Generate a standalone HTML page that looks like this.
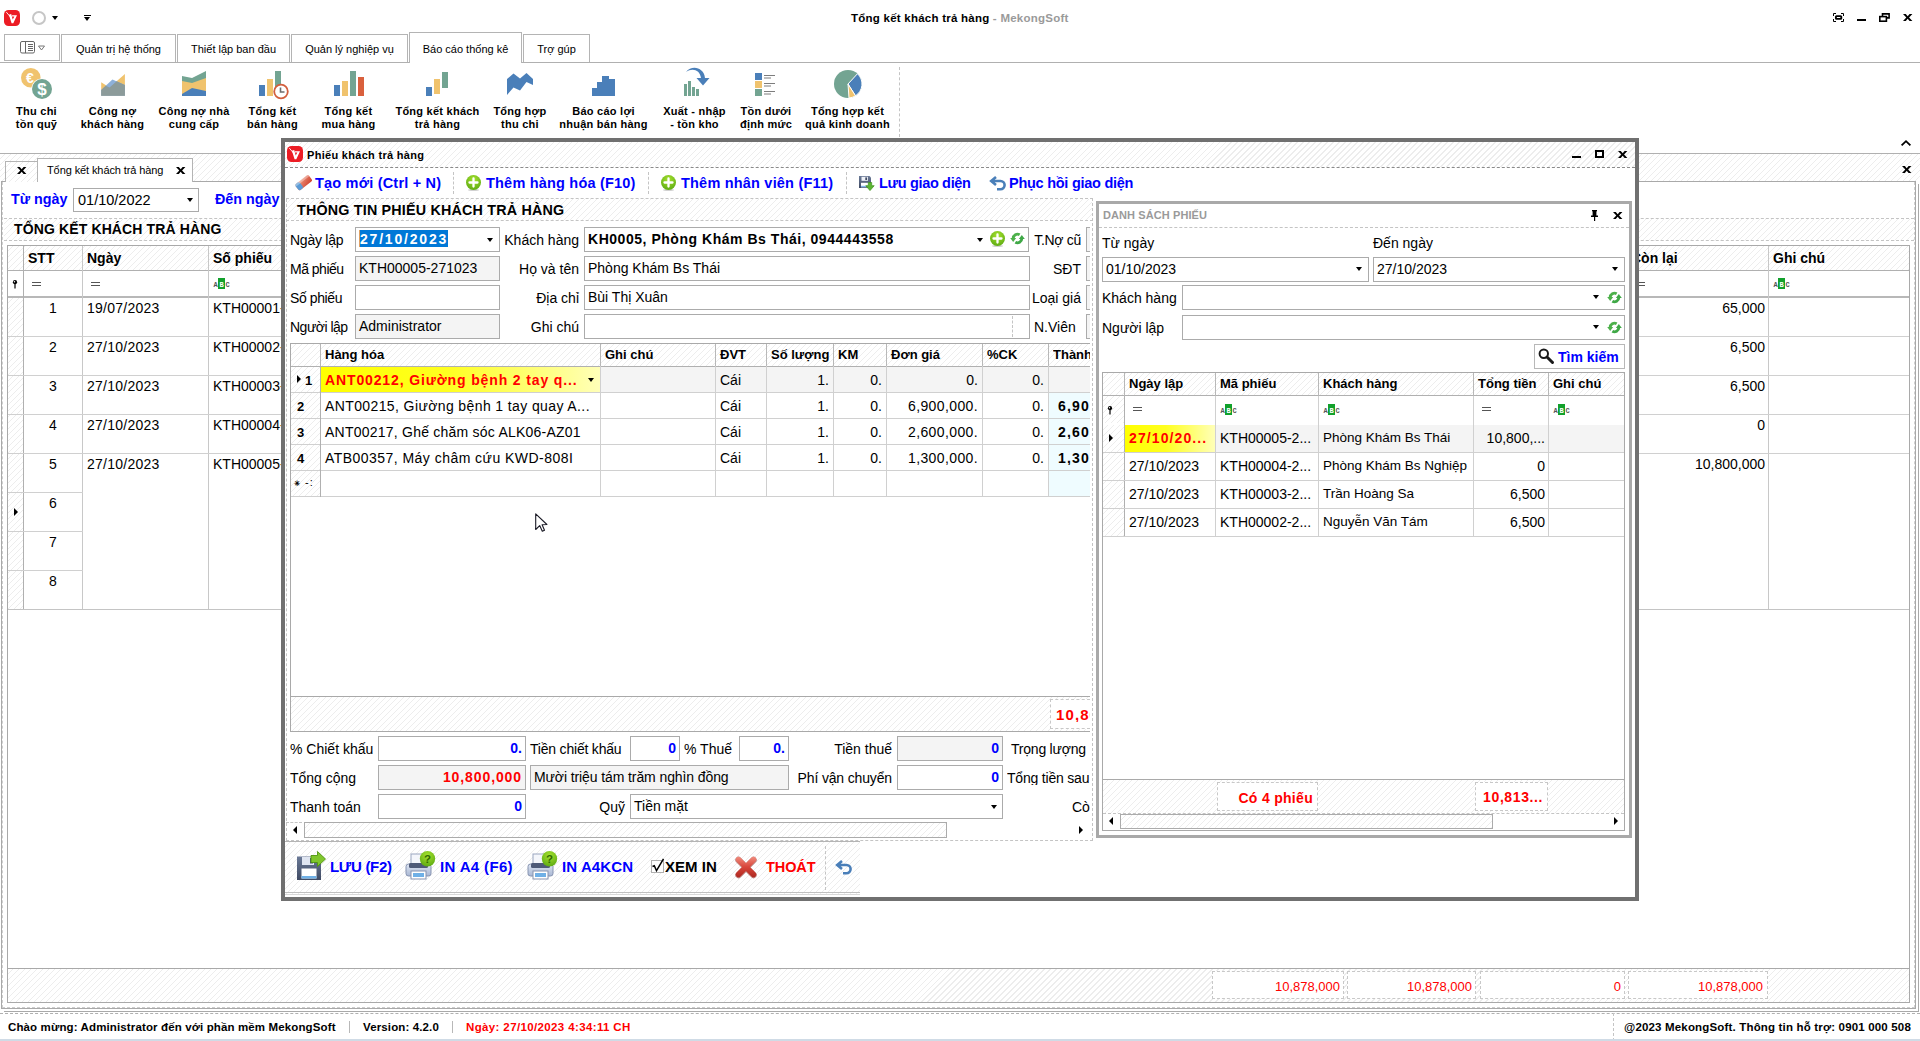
<!DOCTYPE html>
<html lang="vi">
<head>
<meta charset="utf-8">
<title>Tổng kết khách trả hàng - MekongSoft</title>
<style>
*{box-sizing:border-box;margin:0;padding:0}
html,body{width:1920px;height:1041px;overflow:hidden;background:#fff}
body{position:relative;font-family:"Liberation Sans",sans-serif;font-size:11px;color:#000;line-height:1}
.a{position:absolute;white-space:nowrap}
.b{font-weight:bold}
.blue{color:#0000ff}
.red{color:#ff0000}
.hatch{background-color:#fff;background-image:repeating-linear-gradient(135deg,rgba(0,0,0,0) 0,rgba(0,0,0,0) 3.24px,#ededed 3.24px,#ededed 4.24px)}
.hl{position:absolute;height:1px;background:#a9a9a9}
.vl{position:absolute;width:1px;background:#a9a9a9}
.dh{position:absolute;height:0;border-top:1px dashed #c4c4c4}
.dv{position:absolute;width:0;border-left:1px dashed #c4c4c4}
.inp{position:absolute;border:1px solid #ababab;background:#fff;height:25px}
.ro{background:#f4f4f4}
.t14{font-size:14px}
.t13{font-size:13px}
.rtab{position:absolute;top:34px;height:28px;border:1px solid #b4b4b4;border-bottom:none;background:#fff;text-align:center;line-height:29px;font-size:11px;box-shadow:inset 1px 1px 0 #fff,inset -1px 0 0 #fff}
.rlab{letter-spacing:.25px;position:absolute;top:105px;text-align:center;font-weight:bold;font-size:11px;line-height:13px;white-space:nowrap;transform:translateX(-50%)}
.ric{position:absolute;top:68px;width:32px;height:32px}
.arr{position:absolute;width:0;height:0;border-left:3.5px solid transparent;border-right:3.5px solid transparent;border-top:4px solid #000}
svg{position:absolute;overflow:visible}
</style>
</head>
<body>

<svg width="0" height="0" style="left:0;top:0"><defs>
<radialGradient id="gp" cx="0.5" cy="0.3" r="0.75"><stop offset="0" stop-color="#a6e22e"/><stop offset="1" stop-color="#5aa811"/></radialGradient>
<linearGradient id="gx" gradientUnits="userSpaceOnUse" x1="0" y1="2" x2="0" y2="22"><stop offset="0" stop-color="#f08a7c"/><stop offset=".5" stop-color="#d8453a"/><stop offset="1" stop-color="#b02a22"/></linearGradient>
<linearGradient id="gf" x1="0" y1="0" x2="0" y2="1"><stop offset="0" stop-color="#6b7a97"/><stop offset="1" stop-color="#3f4a63"/></linearGradient>
<linearGradient id="gpr" x1="0" y1="0" x2="0" y2="1"><stop offset="0" stop-color="#dfe6f3"/><stop offset="1" stop-color="#a9b7d3"/></linearGradient>
<linearGradient id="ger" x1="0" y1="0" x2="1" y2="1"><stop offset="0" stop-color="#f4a48c"/><stop offset="1" stop-color="#cf3f2b"/></linearGradient>
<g id="plus"><ellipse cx="7.500" cy="15" rx="5.500" ry="1" fill="#000" opacity=".18"/><circle cx="7.500" cy="7.500" r="7.500" fill="url(#gp)"/><path d="M7.500 3.500v8M3.500 7.500h8" stroke="#fff" stroke-width="2.300" stroke-linecap="round"/></g>
<g id="refr"><path d="M9.650 2.780A4.300 4.300 0 0 0 3.200 6.500" fill="none" stroke="#4db14b" stroke-width="2.900"/><path d="M.2 6L6.200 6 3.200 9.900z" fill="#4db14b"/><path d="M5.350 10.220A4.300 4.300 0 0 0 11.800 6.500" fill="none" stroke="#3fa846" stroke-width="2.900"/><path d="M8.800 7L14.800 7 11.800 3.100z" fill="#3fa846"/></g>
<g id="undo"><path d="M6 1L1.200 5 6 9M1.800 5H10.500a4 4 0 0 1 0 8.200H7" fill="none" stroke="#4a7fb9" stroke-width="2.600" stroke-linejoin="miter"/></g>
<g id="printer"><rect x="6" y="1" width="15" height="11" fill="#f4f6fb" stroke="#9aa6bf" stroke-width="1"/><rect x="1" y="11" width="25" height="12" rx="2.500" fill="url(#gpr)" stroke="#8693b0" stroke-width="1"/><rect x="4" y="10" width="19" height="5" rx="1.500" fill="#4f5b78"/><rect x="6" y="18" width="15" height="8" fill="#fff" stroke="#8693b0" stroke-width="1"/><rect x="8" y="20" width="11" height="4" fill="#6fb0e6"/><circle cx="22.500" cy="5.700" r="7.700" fill="url(#gp)"/><text x="22.500" y="10" font-family="Liberation Sans,sans-serif" font-size="11.500" font-weight="bold" fill="#2f6a00" text-anchor="middle">?</text></g>
</defs></svg>
<!-- ===== TITLE BAR ===== -->
<svg style="left:4px;top:10px" width="16" height="16" viewBox="0 0 16 16"><rect width="16" height="16" rx="4.5" fill="#ec1c24"/><path d="M2.300 2.100L6.500 7" stroke="#fff" stroke-width=".9" fill="none"/><path d="M4.900 4.700L7.200 4.100 8.700 9.600 10.400 6.400 7.900 6.400 8.100 5.300 13 5.300 9.300 13.300 7.600 13.300z" fill="#fff"/></svg>
<div class="a" style="left:32px;top:11px;width:14px;height:14px;border:2px solid #c6c6c6;border-radius:50%"></div>
<div class="arr" style="left:52px;top:16px"></div>
<div class="a" style="left:84px;top:15px;width:7px;height:1px;background:#000"></div>
<div class="arr" style="left:84px;top:17px"></div>
<div class="a b" style="left:851px;top:12.5px;font-size:11.5px;letter-spacing:.24px">Tổng kết khách trả hàng<span style="color:#9a9a9a"> - MekongSoft</span></div>
<!-- window buttons -->
<svg style="left:1833px;top:13px" width="11" height="9" viewBox="0 0 11 9" fill="none" stroke="#000"><path d="M.5 3V.5H3M8 .5h2.500V3M10.500 6v2.500H8M3 8.500H.5V6" stroke-width="1"/><rect x="2.900" y="3.100" width="5.400" height="2.800" rx=".6" stroke-width="1.900"/></svg>
<div class="a" style="left:1857px;top:19px;width:9px;height:2px;background:#000"></div>
<svg style="left:1879px;top:13px" width="11" height="9" viewBox="0 0 11 9" fill="none" stroke="#000" stroke-width="1.6"><path d="M3.5 3V.9h6.6v4H8"/><rect x=".8" y="3.6" width="6.6" height="4.6" fill="#fff"/></svg>
<svg style="left:1903px;top:14px" width="10" height="7" viewBox="0 0 10 7"><path d="M0 0h2.800l1.900 2.300L6.600 0h2.800L6.100 3.500 9.400 7h-2.800L4.700 4.700 2.800 7H0l3.300-3.500z" fill="#000"/></svg>

<!-- ===== RIBBON TABS ===== -->
<div class="hl" style="left:0;top:62px;width:1920px;background:#b0b0b0"></div>
<div class="a" style="left:4px;top:34px;width:56px;height:27px;border:1px solid #b4b4b4;background:#fff"></div>
<svg style="left:20px;top:41px" width="26" height="13" viewBox="0 0 26 13" fill="none" stroke="#666" stroke-width="1"><rect x=".5" y=".5" width="14" height="11.5" rx="1.5"/><path d="M5.5 .5v11.5M8 3.5h5M8 5.5h5M8 7.5h5M8 9.5h5" /><path d="M18.5 5h6l-3 4z" stroke="#777"/></svg>
<div class="rtab" style="left:61px;width:115px">Quản trị hệ thống</div>
<div class="rtab" style="left:177px;width:113px">Thiết lập ban đầu</div>
<div class="rtab" style="left:291px;width:117px">Quản lý nghiệp vụ</div>
<div class="rtab" style="left:409px;width:113px;top:32px;height:31px;line-height:32px">Báo cáo thống kê</div>
<div class="rtab" style="left:523px;width:67px">Trợ gúp</div>

<!-- ===== RIBBON ===== -->
<div class="rlab" style="left:36.5px">Thu chi<br>tồn quỹ</div>
<div class="rlab" style="left:112.5px">Công nợ<br>khách hàng</div>
<div class="rlab" style="left:194px">Công nợ nhà<br>cung cấp</div>
<div class="rlab" style="left:272.5px">Tổng kết<br>bán hàng</div>
<div class="rlab" style="left:348.5px">Tổng kết<br>mua hàng</div>
<div class="rlab" style="left:437.5px">Tổng kết khách<br>trả hàng</div>
<div class="rlab" style="left:520px">Tổng hợp<br>thu chi</div>
<div class="rlab" style="left:603.5px">Báo cáo lợi<br>nhuận bán hàng</div>
<div class="rlab" style="left:694.5px">Xuất - nhập<br>- tồn kho</div>
<div class="rlab" style="left:766px">Tồn dưới<br>định mức</div>
<div class="rlab" style="left:847.5px">Tổng hợp kết<br>quả kinh doanh</div>
<div class="dv" style="left:899px;top:67px;height:70px"></div>

<!-- 1 thu chi ton quy -->
<svg class="ric" style="left:21px" viewBox="0 0 32 32"><circle cx="9.8" cy="9.8" r="9.8" fill="#f0c36e"/><text x="9" y="14.5" font-family="Liberation Sans,sans-serif" font-size="14" font-weight="bold" fill="#fff" text-anchor="middle">€</text><circle cx="21" cy="21" r="10.6" fill="#fff"/><circle cx="21" cy="21" r="10" fill="#73a492"/><text x="21" y="27" font-family="Liberation Sans,sans-serif" font-size="17" font-weight="bold" fill="#fff" text-anchor="middle">$</text></svg>
<!-- 2 cong no khach hang -->
<svg class="ric" style="left:97px" viewBox="0 0 32 32"><path d="M4.200 14.300L12.500 19.600 27.900 6.100V27.700H4.200z" fill="#f0c36e"/><path d="M4.200 21.900L15.400 11.400 27.900 16.900V27.700H4.200z" fill="#8db0d9"/><path d="M4.200 21.900L8.700 17.700 12.500 19.600 19.700 13.300 27.900 16.900V27.700H4.200z" fill="#8c9b9a"/></svg>
<!-- 3 cong no nha cung cap -->
<svg class="ric" style="left:178px" viewBox="0 0 32 32"><path d="M4 8l10 2 14-7v25H4z" fill="#73a492"/><path d="M4 13l10 2 14-5v18H4z" fill="#f0c36e"/><path d="M4 26l10-6 14 3v5H4z" fill="#4a7fb9"/></svg>
<!-- 4 tong ket ban hang -->
<svg class="ric" style="left:256px" viewBox="0 0 32 32"><rect x="3" y="17" width="6" height="11" fill="#4a7fb9"/><rect x="11" y="11" width="6" height="17" fill="#f0c36e"/><rect x="19" y="3" width="6" height="18" fill="#73a492"/><circle cx="25" cy="23.500" r="6.800" fill="#fff" stroke="#d25f3e" stroke-width="1.800"/><path d="M24.500 19.500v4.500h4" fill="none" stroke="#6d6d6d" stroke-width="1.600"/></svg>
<!-- 5 tong ket mua hang -->
<svg class="ric" style="left:332px" viewBox="0 0 32 32"><rect x="2" y="17" width="6" height="11" fill="#4a7fb9"/><rect x="10" y="13" width="6" height="15" fill="#f0c36e"/><rect x="18" y="3" width="6" height="25" fill="#73a492"/><rect x="26" y="9" width="6" height="19" fill="#d9603d"/></svg>
<!-- 6 tong ket khach tra hang -->
<svg class="ric" style="left:421px" viewBox="0 0 32 32"><rect x="5" y="19" width="6" height="9" fill="#4a7fb9"/><rect x="13" y="11" width="6" height="15" fill="#f0c36e"/><rect x="21" y="4" width="6" height="16" fill="#73a492"/></svg>
<!-- 7 tong hop thu chi -->
<svg class="ric" style="left:504px" viewBox="0 0 32 32"><path d="M3 11l6.500-5.500 6.500 5 6.500-5.500 6.500 6v6l-6.500-3-6.500 8.500-6.500-3L3 27z" fill="#4a7fb9"/></svg>
<!-- 8 bao cao loi nhuan -->
<svg class="ric" style="left:588px" viewBox="0 0 32 32"><path d="M4 28V20h5v-6h5V8h7v3h6v17z" fill="#4a7fb9"/></svg>
<!-- 9 xuat nhap ton -->
<svg class="ric" style="left:679px" viewBox="0 0 32 32"><rect x="5" y="16" width="3" height="12" fill="#73a492"/><rect x="9" y="13" width="3" height="15" fill="#73a492"/><rect x="13" y="19" width="3" height="9" fill="#73a492"/><rect x="17" y="21" width="3" height="7" fill="#73a492"/><path d="M8 4.500C14 0 22 2 23 10.500h-4.500l6.500 7.500 6.500-7.500H27C26 0 14-3 8 4.500z" fill="#4a7fb9" transform="translate(-1 -0.500)"/></svg>
<!-- 10 ton duoi dinh muc -->
<svg class="ric" style="left:750px" viewBox="0 0 32 32"><rect x="5" y="5" width="7" height="7" fill="#4a7fb9"/><rect x="5" y="13" width="7" height="7" fill="#f0c36e"/><rect x="5" y="21" width="7" height="7" fill="#73a492"/><path d="M14 7.500h11M14 10h7M14 15.500h11M14 18h7M14 23.500h11M14 26h7" stroke="#7d7d7d" stroke-width="1"/></svg>
<!-- 11 tong hop ket qua -->
<svg class="ric" style="left:832px" viewBox="0 0 32 32"><circle cx="16" cy="16" r="14" fill="#73a492"/><path d="M16 16L25.500 5.700A14 14 0 0 1 23.500 27.800z" fill="#4a7fb9" stroke="#fff" stroke-width="1"/><path d="M16 16L23.500 27.800A14 14 0 0 1 17 30z" fill="#f0c36e" stroke="#fff" stroke-width="1"/></svg>

<svg style="left:1901px;top:140px" width="10" height="6" viewBox="0 0 10 6" fill="none" stroke="#000" stroke-width="1.8"><path d="M.6 5.4L5 1.2l4.4 4.2"/></svg>
<div class="hl" style="left:0;top:153px;width:1920px;background:#b0b0b0"></div>


<!-- ===== DOC AREA ===== -->
<div class="a hatch" style="left:0;top:154px;width:1920px;height:27px"></div>
<svg style="left:1902px;top:166px" width="10" height="7" viewBox="0 0 10 7"><path d="M0 0h2.800l1.900 2.300L6.600 0h2.800L6.100 3.500 9.400 7h-2.800L4.700 4.700 2.800 7H0l3.300-3.500z" fill="#000"/></svg>
<!-- outer second border -->
<div class="vl" style="left:1918px;top:184px;height:828px"></div>
<div class="hl" style="left:4px;top:1011px;width:1915px"></div>
<!-- page panel -->
<div class="a" style="left:1px;top:181px;width:1915px;height:828px;border:1px solid #a9a9a9;background:#fff"></div>
<div class="a" style="left:2px;top:182px;width:1913px;height:826px;border:1px dashed #cfcfcf;border-top:none"></div>
<!-- tabs -->
<div class="a hatch" style="left:5px;top:161px;width:33px;height:21px;border:1px solid #b4b4b4;border-bottom:none"></div>
<svg style="left:17px;top:167px" width="10" height="7" viewBox="0 0 10 7"><path d="M0 0h2.800l1.900 2.300L6.600 0h2.800L6.100 3.500 9.400 7h-2.800L4.700 4.700 2.800 7H0l3.300-3.500z" fill="#000"/></svg>
<div class="a" style="left:37px;top:158px;width:156px;height:24px;border:1px solid #b4b4b4;border-bottom:none;background:#fff"></div>
<div class="a" style="left:47px;top:165px;font-size:11px;letter-spacing:-.1px">Tổng kết khách trả hàng</div>
<svg style="left:176px;top:167px" width="10" height="7" viewBox="0 0 10 7"><path d="M0 0h2.800l1.900 2.300L6.600 0h2.800L6.100 3.500 9.400 7h-2.800L4.700 4.700 2.800 7H0l3.300-3.500z" fill="#000"/></svg>
<div class="dh" style="left:0;top:1013px;width:1920px;border-color:#b0b0b0"></div>

<!-- filter row -->
<div class="a b blue" style="left:11px;top:192px;font-size:14.300px">Từ ngày</div>
<div class="inp" style="left:73px;top:188px;width:126px;height:24px"></div>
<div class="a" style="left:78px;top:193px;font-size:14.500px">01/10/2022</div>
<div class="arr" style="left:187px;top:198px"></div>
<div class="a b blue" style="left:215px;top:192px;font-size:14.300px">Đến ngày</div>
<div class="a hatch" style="left:4px;top:219px;width:1910px;height:22px"></div>
<div class="dh" style="left:4px;top:218px;width:1910px"></div>
<div class="dh" style="left:4px;top:240px;width:1910px"></div>
<div class="a b" style="left:14px;top:222px;font-size:14px;letter-spacing:.13px">TỔNG KẾT KHÁCH TRẢ HÀNG</div>

<!-- grid -->
<div class="a" style="left:7px;top:245px;width:1903px;height:758px;border:1px solid #a9a9a9;background:#fff"></div>
<div class="a hatch" style="left:8px;top:246px;width:1901px;height:25px"></div>
<div class="hl" style="left:8px;top:270px;width:1901px;background:#b0b0b0"></div>
<div class="hl" style="left:8px;top:296px;width:1901px;height:2px;background:#b8b8b8"></div>
<div class="a hatch" style="left:8px;top:298px;width:15px;height:311px"></div>
<div class="vl" style="left:23px;top:246px;height:364px;background:#b0b0b0"></div>
<div class="vl" style="left:82px;top:246px;height:364px;background:#c8c8c8"></div>
<div class="vl" style="left:208px;top:246px;height:364px;background:#c8c8c8"></div>
<div class="vl" style="left:1768px;top:246px;height:364px;background:#c8c8c8"></div>
<div class="hl" style="left:8px;top:336px;width:1901px;background:#d0d0d0"></div>
<div class="hl" style="left:8px;top:375px;width:1901px;background:#d0d0d0"></div>
<div class="hl" style="left:8px;top:414px;width:1901px;background:#d0d0d0"></div>
<div class="hl" style="left:8px;top:453px;width:1901px;background:#d0d0d0"></div>
<div class="hl" style="left:8px;top:492px;width:75px;background:#d0d0d0"></div>
<div class="hl" style="left:8px;top:531px;width:75px;background:#d0d0d0"></div>
<div class="hl" style="left:8px;top:570px;width:75px;background:#d0d0d0"></div>
<div class="hl" style="left:8px;top:609px;width:1901px;background:#c4c4c4"></div>
<div class="a b t14" style="left:28px;top:251px">STT</div>
<div class="a b t14" style="left:87px;top:251px">Ngày</div>
<div class="a b t14" style="left:213px;top:251px">Số phiếu</div>
<div class="a b t14" style="left:1631px;top:251px">Còn lại</div>
<div class="a b t14" style="left:1773px;top:251px">Ghi chú</div>
<!-- filter row icons -->
<svg style="left:12px;top:279px" width="6" height="10" viewBox="0 0 6 10"><circle cx="3" cy="3.200" r="2.100" fill="#000"/><circle cx="2.500" cy="2.700" r=".7" fill="#fff"/><path d="M3 5v4.500" stroke="#000" stroke-width="1.200"/></svg>
<div class="a" style="left:32px;top:282px;width:9px;height:4px;border-top:1px solid #555;border-bottom:1px solid #555"></div>
<div class="a" style="left:91px;top:282px;width:9px;height:4px;border-top:1px solid #555;border-bottom:1px solid #555"></div>
<div class="a" style="left:1639px;top:282px;width:6px;height:4px;border-top:1px solid #555;border-bottom:1px solid #555"></div>
<svg style="left:213px;top:278px" width="17" height="11" viewBox="0 0 17 11"><rect x="5" y="0" width="7" height="11" fill="#12a12c"/><text x="2.500" y="8.500" font-family="Liberation Mono,monospace" font-size="7" font-weight="bold" fill="#555" text-anchor="middle">A</text><text x="8.500" y="8.500" font-family="Liberation Mono,monospace" font-size="7" font-weight="bold" fill="#fff" text-anchor="middle">B</text><text x="14.500" y="8.500" font-family="Liberation Mono,monospace" font-size="7" font-weight="bold" fill="#555" text-anchor="middle">C</text></svg>
<svg style="left:1773px;top:278px" width="17" height="11" viewBox="0 0 17 11"><rect x="5" y="0" width="7" height="11" fill="#12a12c"/><text x="2.500" y="8.500" font-family="Liberation Mono,monospace" font-size="7" font-weight="bold" fill="#555" text-anchor="middle">A</text><text x="8.500" y="8.500" font-family="Liberation Mono,monospace" font-size="7" font-weight="bold" fill="#fff" text-anchor="middle">B</text><text x="14.500" y="8.500" font-family="Liberation Mono,monospace" font-size="7" font-weight="bold" fill="#555" text-anchor="middle">C</text></svg>
<!-- rows -->
<div class="a t14" style="left:24px;width:58px;text-align:center;top:301px">1</div>
<div class="a t14" style="left:24px;width:58px;text-align:center;top:340px">2</div>
<div class="a t14" style="left:24px;width:58px;text-align:center;top:379px">3</div>
<div class="a t14" style="left:24px;width:58px;text-align:center;top:418px">4</div>
<div class="a t14" style="left:24px;width:58px;text-align:center;top:457px">5</div>
<div class="a t14" style="left:24px;width:58px;text-align:center;top:496px">6</div>
<div class="a t14" style="left:24px;width:58px;text-align:center;top:535px">7</div>
<div class="a t14" style="left:24px;width:58px;text-align:center;top:574px">8</div>
<div class="a t14" style="left:87px;top:301px;letter-spacing:.25px">19/07/2023</div>
<div class="a t14" style="left:87px;top:340px;letter-spacing:.25px">27/10/2023</div>
<div class="a t14" style="left:87px;top:379px;letter-spacing:.25px">27/10/2023</div>
<div class="a t14" style="left:87px;top:418px;letter-spacing:.25px">27/10/2023</div>
<div class="a t14" style="left:87px;top:457px;letter-spacing:.25px">27/10/2023</div>
<div class="a t14" style="left:213px;top:301px">KTH00001-190723</div>
<div class="a t14" style="left:213px;top:340px">KTH00002-271023</div>
<div class="a t14" style="left:213px;top:379px">KTH00003-271023</div>
<div class="a t14" style="left:213px;top:418px">KTH00004-271023</div>
<div class="a t14" style="left:213px;top:457px">KTH00005-271023</div>
<div class="a t14" style="right:155px;top:301px">65,000</div>
<div class="a t14" style="right:155px;top:340px">6,500</div>
<div class="a t14" style="right:155px;top:379px">6,500</div>
<div class="a t14" style="right:155px;top:418px">0</div>
<div class="a t14" style="right:155px;top:457px">10,800,000</div>
<div class="a" style="left:14px;top:508px;width:0;height:0;border-top:4px solid transparent;border-bottom:4px solid transparent;border-left:4px solid #000"></div>
<!-- footer -->
<div class="a hatch" style="left:8px;top:969px;width:1901px;height:33px"></div>
<div class="hl" style="left:8px;top:968px;width:1901px"></div>
<div class="a" style="left:1212px;top:971px;width:132px;height:28px;border:1px dashed #c8c8c8;background:#fff"></div>
<div class="a" style="left:1347px;top:971px;width:129px;height:28px;border:1px dashed #c8c8c8;background:#fff"></div>
<div class="a" style="left:1480px;top:971px;width:145px;height:28px;border:1px dashed #c8c8c8;background:#fff"></div>
<div class="a" style="left:1628px;top:971px;width:140px;height:28px;border:1px dashed #c8c8c8;background:#fff"></div>
<div class="a red t13" style="right:580px;top:980px">10,878,000</div>
<div class="a red t13" style="right:448px;top:980px">10,878,000</div>
<div class="a red t13" style="right:299px;top:980px">0</div>
<div class="a red t13" style="right:157px;top:980px">10,878,000</div>



<!-- ===== DIALOG ===== -->
<div class="a" style="left:281px;top:138px;width:1358px;height:763px;border:4px solid #707070;background:#fff"></div>
<div class="a hatch" style="left:285px;top:142px;width:1350px;height:25px"></div>
<div class="dh" style="left:285px;top:167px;width:1350px;border-top:1px dashed #8a8a8a"></div>
<svg style="left:287px;top:146px" width="16" height="16" viewBox="0 0 16 16"><rect width="16" height="16" rx="4.500" fill="#ec1c24"/><path d="M2.300 2.100L6.500 7" stroke="#fff" stroke-width=".9" fill="none"/><path d="M4.900 4.700L7.200 4.100 8.700 9.600 10.400 6.400 7.900 6.400 8.100 5.300 13 5.300 9.300 13.300 7.600 13.300z" fill="#fff"/></svg>
<div class="a b" style="left:307px;top:149.500px;font-size:11px;letter-spacing:.3px">Phiếu khách trả hàng</div>
<div class="a" style="left:1572px;top:156px;width:9px;height:2px;background:#000"></div>
<div class="a" style="left:1595px;top:150px;width:9px;height:8px;border:2px solid #000"></div>
<svg style="left:1618px;top:151px" width="10" height="7" viewBox="0 0 10 7"><path d="M0 0h2.800l1.900 2.300L6.600 0h2.800L6.100 3.500 9.400 7h-2.800L4.700 4.700 2.800 7H0l3.300-3.500z" fill="#000"/></svg>

<!-- toolbar -->

<svg style="left:295px;top:175px" width="17" height="15" viewBox="0 0 17 15"><g transform="rotate(-38 8.500 7.500)"><rect x="0" y="4" width="17" height="7.500" rx="1.600" fill="url(#ger)"/><rect x="0" y="4" width="5.500" height="7.500" rx="1.600" fill="#5b9bd5"/><rect x="0" y="4" width="17" height="2.200" rx="1" fill="#fff" opacity=".35"/></g></svg>
<svg style="left:466px;top:175px" width="15" height="16" viewBox="0 0 15 16"><use href="#plus"/></svg>
<svg style="left:661px;top:175px" width="15" height="16" viewBox="0 0 15 16"><use href="#plus"/></svg>
<svg style="left:859px;top:176px" width="16" height="15" viewBox="0 0 16 15"><path d="M0 0h10.500l1.500 1.500V12H0z" fill="url(#gf)"/><rect x="2.500" y="0.800" width="6.500" height="4" fill="#eef1f7"/><rect x="6.300" y="1.400" width="1.800" height="2.600" fill="#3f4a63"/><rect x="2" y="6.800" width="8" height="4.400" fill="#fff"/><rect x="2" y="9.800" width="8" height="1.400" fill="#7fb2e5"/><path d="M9.300 6.500h3.400v3.200h2.500L11 14.600 6.800 9.700h2.500z" fill="#5cb531" stroke="#3d8f1c" stroke-width=".7"/></svg>
<svg style="left:989px;top:176px" width="17" height="15" viewBox="0 0 17 15"><use href="#undo" transform="translate(1 0)"/></svg>

<div class="a b blue" style="left:315px;top:176px;font-size:14.500px;letter-spacing:.2px">Tạo mới (Ctrl + N)</div>
<div class="dv" style="left:453px;top:172px;height:22px"></div>
<div class="a b blue" style="left:486px;top:176px;font-size:14.500px;letter-spacing:.2px">Thêm hàng hóa (F10)</div>
<div class="dv" style="left:648px;top:172px;height:22px"></div>
<div class="a b blue" style="left:681px;top:176px;font-size:14.500px;letter-spacing:.2px">Thêm nhân viên (F11)</div>
<div class="dv" style="left:846px;top:172px;height:22px"></div>
<div class="a b blue" style="left:879px;top:176px;font-size:14.500px;letter-spacing:-.33px">Lưu giao diện</div>
<div class="a b blue" style="left:1009px;top:176px;font-size:14.500px;letter-spacing:-.26px">Phục hồi giao diện</div>

<!-- group header -->
<div class="a hatch" style="left:286px;top:199px;width:806px;height:21px"></div>
<div class="dh" style="left:286px;top:198px;width:807px"></div>
<div class="dh" style="left:286px;top:220px;width:807px"></div>
<div class="dv" style="left:1092px;top:198px;height:643px"></div>
<div class="dh" style="left:286px;top:840px;width:807px"></div>
<div class="a b" style="left:297px;top:203px;font-size:14.300px;letter-spacing:.2px">THÔNG TIN PHIẾU KHÁCH TRẢ HÀNG</div>

<!-- form left -->
<div class="a t14" style="left:290px;top:233px;letter-spacing:-.25px">Ngày lập</div>
<div class="a t14" style="left:290px;top:262px;letter-spacing:-.5px">Mã phiếu</div>
<div class="a t14" style="left:290px;top:291px;letter-spacing:-.4px">Số phiếu</div>
<div class="a t14" style="left:290px;top:320px;letter-spacing:-.5px">Người lập</div>
<div class="inp" style="left:355px;top:227px;width:145px"></div>
<div class="inp ro" style="left:355px;top:256px;width:145px"></div>
<div class="inp" style="left:355px;top:285px;width:145px"></div>
<div class="inp ro" style="left:355px;top:314px;width:145px"></div>
<div class="a" style="left:359px;top:230px;width:89px;height:17px;background:#0078d7;border-left:1px solid #e0a060"></div>
<div class="a b t14" style="left:360px;top:232px;color:#fff;letter-spacing:1.8px">27/10/2023</div>
<div class="arr" style="left:487px;top:238px"></div>
<div class="a t14" style="left:359px;top:261px">KTH00005-271023</div>
<div class="a t14" style="left:359px;top:319px">Administrator</div>
<div class="a t14" style="right:1341px;top:233px">Khách hàng</div>
<div class="a t14" style="right:1341px;top:262px">Họ và tên</div>
<div class="a t14" style="right:1341px;top:291px">Địa chỉ</div>
<div class="a t14" style="right:1341px;top:320px">Ghi chú</div>
<div class="inp" style="left:584px;top:227px;width:445px"></div>
<div class="inp" style="left:584px;top:256px;width:446px"></div>
<div class="inp" style="left:584px;top:285px;width:446px"></div>
<div class="inp" style="left:584px;top:314px;width:446px"></div>
<div class="dv" style="left:1012px;top:316px;height:21px"></div>
<div class="a b t14" style="left:588px;top:232px;letter-spacing:.53px">KH0005, Phòng Khám Bs Thái, 0944443558</div>
<div class="arr" style="left:977px;top:238px"></div>

<svg style="left:990px;top:231px" width="15" height="16" viewBox="0 0 15 16"><use href="#plus"/></svg>
<svg style="left:1010px;top:232px" width="15" height="13" viewBox="0 0 15 13"><use href="#refr"/></svg>

<div class="a t14" style="left:588px;top:261px">Phòng Khám Bs Thái</div>
<div class="a t14" style="left:588px;top:290px">Bùi Thị Xuân</div>
<div class="a t14" style="right:839px;top:233px;letter-spacing:-.3px">T.Nợ cũ</div>
<div class="a t14" style="right:839px;top:262px">SĐT</div>
<div class="a t14" style="right:839px;top:291px">Loại giá</div>
<div class="a t14" style="left:1034px;top:320px">N.Viên</div>
<div class="inp ro" style="left:1086px;top:227px;width:4px;border-right:none"></div>
<div class="inp ro" style="left:1086px;top:256px;width:4px;border-right:none"></div>
<div class="inp ro" style="left:1086px;top:285px;width:4px;border-right:none"></div>
<div class="inp ro" style="left:1086px;top:314px;width:4px;border-right:none"></div>

<!-- dialog grid -->
<div class="a" style="left:290px;top:343px;width:800px;height:389px;border:1px solid #a9a9a9;border-right:none;background:#fff"></div>
<div class="a hatch" style="left:291px;top:344px;width:799px;height:22px"></div>
<div class="a hatch" style="left:291px;top:367px;width:29px;height:129px"></div>
<div class="a" style="left:321px;top:367px;width:769px;height:25px;background:#f4f4f4"></div>
<div class="a" style="left:321px;top:367px;width:279px;height:25px;background:linear-gradient(90deg,#ffff00 0,#ffff20 45%,#ffffb8 100%)"></div>
<div class="a" style="left:1049px;top:393px;width:41px;height:103px;background:#effcff"></div>
<div class="hl" style="left:291px;top:366px;width:799px;background:#b0b0b0"></div>
<div class="hl" style="left:291px;top:392px;width:799px;background:#d0d0d0"></div>
<div class="hl" style="left:291px;top:418px;width:799px;background:#d0d0d0"></div>
<div class="hl" style="left:291px;top:444px;width:799px;background:#d0d0d0"></div>
<div class="hl" style="left:291px;top:470px;width:799px;background:#d0d0d0"></div>
<div class="hl" style="left:291px;top:496px;width:799px;background:#d0d0d0"></div>
<div class="vl" style="left:320px;top:344px;height:153px;background:#b0b0b0"></div>
<div class="vl" style="left:320px;top:344px;height:22px;background:#b8b8b8"></div>
<div class="vl" style="left:600px;top:344px;height:153px;background:#d0d0d0"></div>
<div class="vl" style="left:600px;top:344px;height:22px;background:#b8b8b8"></div>
<div class="vl" style="left:715px;top:344px;height:153px;background:#d0d0d0"></div>
<div class="vl" style="left:715px;top:344px;height:22px;background:#b8b8b8"></div>
<div class="vl" style="left:766px;top:344px;height:153px;background:#d0d0d0"></div>
<div class="vl" style="left:766px;top:344px;height:22px;background:#b8b8b8"></div>
<div class="vl" style="left:833px;top:344px;height:153px;background:#d0d0d0"></div>
<div class="vl" style="left:833px;top:344px;height:22px;background:#b8b8b8"></div>
<div class="vl" style="left:886px;top:344px;height:153px;background:#d0d0d0"></div>
<div class="vl" style="left:886px;top:344px;height:22px;background:#b8b8b8"></div>
<div class="vl" style="left:982px;top:344px;height:153px;background:#d0d0d0"></div>
<div class="vl" style="left:982px;top:344px;height:22px;background:#b8b8b8"></div>
<div class="vl" style="left:1048px;top:344px;height:153px;background:#d0d0d0"></div>
<div class="vl" style="left:1048px;top:344px;height:22px;background:#b8b8b8"></div>
<div class="a b t13" style="left:325px;top:348px">Hàng hóa</div>
<div class="a b t13" style="left:605px;top:348px">Ghi chú</div>
<div class="a b t13" style="left:720px;top:348px">ĐVT</div>
<div class="a b t13" style="left:771px;top:348px">Số lượng</div>
<div class="a b t13" style="left:838px;top:348px">KM</div>
<div class="a b t13" style="left:891px;top:348px">Đơn giá</div>
<div class="a b t13" style="left:987px;top:348px">%CK</div>
<div class="a b t13" style="left:1053px;top:348px;width:37px;overflow:hidden">Thành tiền</div>
<div class="a b t13" style="left:305px;top:374px">1</div>
<div class="a b t13" style="left:297px;top:400px">2</div>
<div class="a b t13" style="left:297px;top:426px">3</div>
<div class="a b t13" style="left:297px;top:452px">4</div>
<div class="a" style="left:297px;top:375px;width:0;height:0;border-top:4px solid transparent;border-bottom:4px solid transparent;border-left:4px solid #000"></div>
<div class="a" style="left:294px;top:477px;font-size:11px;letter-spacing:1px">&#8277; -:</div>
<div class="a b red t14" style="left:325px;top:373px;letter-spacing:.87px">ANT00212, Giường bệnh 2 tay q...</div>
<div class="a t14" style="left:720px;top:373px">Cái</div>
<div class="a t14" style="right:1091px;top:373px">1.</div>
<div class="a t14" style="right:1038px;top:373px">0.</div>
<div class="a t14" style="right:942px;top:373px">0.</div>
<div class="a t14" style="right:876px;top:373px">0.</div>
<div class="a t14" style="left:325px;top:399px;letter-spacing:.39px">ANT00215, Giường bệnh 1 tay quay A...</div>
<div class="a t14" style="left:720px;top:399px">Cái</div>
<div class="a t14" style="right:1091px;top:399px">1.</div>
<div class="a t14" style="right:1038px;top:399px">0.</div>
<div class="a t14" style="right:942px;top:399px;letter-spacing:.38px">6,900,000.</div>
<div class="a t14" style="right:876px;top:399px">0.</div>
<div class="a b t14" style="left:1058px;top:399px;width:32px;overflow:hidden;letter-spacing:1.2px">6,900,000</div>
<div class="a t14" style="left:325px;top:425px;letter-spacing:.23px">ANT00217, Ghế chăm sóc ALK06-AZ01</div>
<div class="a t14" style="left:720px;top:425px">Cái</div>
<div class="a t14" style="right:1091px;top:425px">1.</div>
<div class="a t14" style="right:1038px;top:425px">0.</div>
<div class="a t14" style="right:942px;top:425px;letter-spacing:.38px">2,600,000.</div>
<div class="a t14" style="right:876px;top:425px">0.</div>
<div class="a b t14" style="left:1058px;top:425px;width:32px;overflow:hidden;letter-spacing:1.2px">2,600,000</div>
<div class="a t14" style="left:325px;top:451px;letter-spacing:.46px">ATB00357, Máy châm cứu KWD-808I</div>
<div class="a t14" style="left:720px;top:451px">Cái</div>
<div class="a t14" style="right:1091px;top:451px">1.</div>
<div class="a t14" style="right:1038px;top:451px">0.</div>
<div class="a t14" style="right:942px;top:451px;letter-spacing:.38px">1,300,000.</div>
<div class="a t14" style="right:876px;top:451px">0.</div>
<div class="a b t14" style="left:1058px;top:451px;width:32px;overflow:hidden;letter-spacing:1.2px">1,300,000</div>
<div class="arr" style="left:588px;top:378px"></div>
<div class="a hatch" style="left:291px;top:697px;width:799px;height:34px"></div>
<div class="hl" style="left:291px;top:696px;width:799px"></div>
<div class="a" style="left:1050px;top:699px;width:40px;height:30px;border:1px dashed #c8c8c8;border-right:none;background:#fff"></div>
<div class="a b red t14" style="left:1056px;top:707px;width:34px;overflow:hidden;letter-spacing:1.1px;font-size:15px">10,800,000</div>

<!-- dialog bottom form -->
<div class="a t14" style="left:290px;top:742px">% Chiết khấu</div>
<div class="a t14" style="left:290px;top:771px">Tổng cộng</div>
<div class="a t14" style="left:290px;top:800px">Thanh toán</div>
<div class="inp" style="left:378px;top:736px;width:148px"></div>
<div class="inp ro" style="left:378px;top:765px;width:148px"></div>
<div class="inp" style="left:378px;top:794px;width:148px"></div>
<div class="a b blue t14" style="right:1398px;top:741px">0.</div>
<div class="a b red t14" style="right:1398px;top:770px;letter-spacing:.9px">10,800,000</div>
<div class="a b blue t14" style="right:1398px;top:799px">0</div>
<div class="a t14" style="left:530px;top:742px;letter-spacing:-.2px">Tiền chiết khấu</div>
<div class="inp" style="left:630px;top:736px;width:50px"></div>
<div class="a b blue t14" style="right:1244px;top:741px">0</div>
<div class="a t14" style="left:684px;top:742px">% Thuế</div>
<div class="inp" style="left:739px;top:736px;width:50px"></div>
<div class="a b blue t14" style="right:1135px;top:741px">0.</div>
<div class="a t14" style="right:1028px;top:742px">Tiền thuế</div>
<div class="inp ro" style="left:897px;top:736px;width:106px"></div>
<div class="a b blue t14" style="right:921px;top:741px">0</div>
<div class="a t14" style="left:1011px;top:742px;letter-spacing:-.22px">Trọng lượng</div>
<div class="inp ro" style="left:530px;top:765px;width:259px"></div>
<div class="a t14" style="left:534px;top:770px;letter-spacing:-.1px">Mười triệu tám trăm nghìn đồng</div>
<div class="a t14" style="right:1028px;top:771px;letter-spacing:-.15px">Phí vận chuyển</div>
<div class="inp" style="left:897px;top:765px;width:106px"></div>
<div class="a b blue t14" style="right:921px;top:770px">0</div>
<div class="a t14" style="left:1007px;top:771px;width:83px;overflow:hidden;letter-spacing:-.2px">Tổng tiền sau</div>
<div class="a t14" style="right:1295px;top:800px">Quỹ</div>
<div class="inp" style="left:630px;top:794px;width:373px"></div>
<div class="a t14" style="left:634px;top:799px">Tiền mặt</div>
<div class="arr" style="left:991px;top:805px"></div>
<div class="a t14" style="left:1072px;top:800px;width:18px;overflow:hidden">Còn lại</div>
<div class="dh" style="left:286px;top:822px;width:16px"></div>
<div class="a" style="left:293px;top:826px;width:0;height:0;border-top:4px solid transparent;border-bottom:4px solid transparent;border-right:4px solid #000"></div>
<div class="a hatch" style="left:304px;top:822px;width:643px;height:16px;border:1px solid #ababab"></div>
<div class="a" style="left:1079px;top:826px;width:0;height:0;border-top:4px solid transparent;border-bottom:4px solid transparent;border-left:4px solid #000"></div>
<div class="a hatch" style="left:285px;top:842px;width:575px;height:52px"></div>
<div class="hl" style="left:285px;top:841px;width:575px;background:#b4b4b4"></div>
<div class="dv" style="left:286px;top:199px;height:642px"></div>
<div class="hl" style="left:285px;top:892px;width:575px;background:#c0c0c0"></div>
<div class="hl" style="left:285px;top:894px;width:575px;background:#d8d8d8"></div>

<svg style="left:297px;top:851px" width="29" height="30" viewBox="0 0 29 30"><path d="M0 5.500h21l3 3V29H0z" fill="url(#gf)"/><rect x="5" y="6" width="12" height="8" fill="#dfe5f1"/><rect x="13" y="7" width="3" height="5.500" fill="#4a566f"/><rect x="4.500" y="17.500" width="15" height="10" fill="#fff"/><rect x="4.500" y="25" width="15" height="2.500" fill="#6fb0e6"/><path d="M14 4.500h6.500V.5L28.500 8 20.500 15.500V11.500H14z" fill="#7fc62c" stroke="#4f9410" stroke-width=".9"/></svg>
<svg style="left:405px;top:853px" width="31" height="28" viewBox="0 0 31 28"><use href="#printer"/></svg>
<svg style="left:527px;top:853px" width="31" height="28" viewBox="0 0 31 28"><use href="#printer"/></svg>
<svg style="left:734px;top:855px" width="24" height="24" viewBox="0 0 24 24" fill="none" stroke-linecap="round"><path d="M4.500 5L19.500 20M19.500 5L4.500 20" stroke="#8e1f18" stroke-width="6.400" opacity=".55"/><path d="M4.500 4.500L19.500 19.500M19.500 4.500L4.500 19.500" stroke="url(#gx)" stroke-width="5.400"/></svg>
<svg style="left:835px;top:860px" width="17" height="15" viewBox="0 0 17 15"><use href="#undo" transform="translate(1 0)"/></svg>

<div class="a b blue" style="left:330px;top:859px;font-size:15px;letter-spacing:-.3px">LƯU (F2)</div>
<div class="a b blue" style="left:440px;top:859px;font-size:15px;letter-spacing:.35px">IN A4 (F6)</div>
<div class="a b blue" style="left:562px;top:859px;font-size:15px;letter-spacing:.1px">IN A4KCN</div>
<div class="a" style="left:651px;top:860px;width:13px;height:13px;border:1px solid #b0b0b0;background:#fff"></div>
<svg style="left:651px;top:858px" width="14" height="15" viewBox="0 0 14 15" fill="none" stroke="#000" stroke-width="1.500"><path d="M1.500 8.500l1.800-.8 2.200 5L12.500 .8"/></svg>
<div class="a b" style="left:665px;top:859px;font-size:15px;letter-spacing:.05px">XEM IN</div>
<div class="a b red" style="left:766px;top:859.500px;font-size:14.500px;letter-spacing:-.1px">THOÁT</div>
<div class="dv" style="left:825px;top:846px;height:44px"></div>

<!-- right panel -->
<div class="a" style="left:1096px;top:201px;width:536px;height:637px;border:3px solid #a9a9a9;background:#fff"></div>
<div class="a b" style="left:1103px;top:210px;font-size:11px;color:#9a9a9a;letter-spacing:.09px">DANH SÁCH PHIẾU</div>
<svg style="left:1590px;top:210px" width="9" height="11" viewBox="0 0 9 11" fill="#000"><rect x="2" y="0" width="5" height="1.300"/><rect x="2.600" y="1" width="3.800" height="5"/><rect x="1" y="5.500" width="7" height="1.500"/><rect x="4" y="7" width="1.200" height="4"/></svg>
<svg style="left:1613px;top:212px" width="10" height="7" viewBox="0 0 10 7"><path d="M0 0h2.800l1.900 2.300L6.600 0h2.800L6.100 3.500 9.400 7h-2.800L4.700 4.700 2.800 7H0l3.300-3.500z" fill="#000"/></svg>
<div class="dh" style="left:1099px;top:227px;width:530px"></div>
<div class="a t14" style="left:1102px;top:236px">Từ ngày</div>
<div class="a t14" style="left:1373px;top:236px">Đến ngày</div>
<div class="inp" style="left:1102px;top:257px;width:267px"></div>
<div class="inp" style="left:1373px;top:257px;width:252px"></div>
<div class="a t14" style="left:1106px;top:262px">01/10/2023</div>
<div class="a t14" style="left:1377px;top:262px">27/10/2023</div>
<div class="arr" style="left:1356px;top:267px"></div>
<div class="arr" style="left:1612px;top:267px"></div>
<div class="a t14" style="left:1102px;top:291px">Khách hàng</div>
<div class="inp" style="left:1182px;top:285px;width:443px"></div>
<div class="arr" style="left:1593px;top:295px"></div>
<div class="a t14" style="left:1102px;top:321px">Người lập</div>
<div class="inp" style="left:1182px;top:315px;width:443px"></div>
<div class="arr" style="left:1593px;top:325px"></div>

<svg style="left:1607px;top:291px" width="15" height="13" viewBox="0 0 15 13"><use href="#refr"/></svg>
<svg style="left:1607px;top:321px" width="15" height="13" viewBox="0 0 15 13"><use href="#refr"/></svg>

<div class="inp" style="left:1534px;top:344px;width:91px;border-color:#b8b8b8"></div>
<svg style="left:1538px;top:348px" width="16" height="16" viewBox="0 0 16 16" fill="none" stroke="#1a1a1a"><circle cx="5.800" cy="5.800" r="4.200" stroke-width="2"/><path d="M9 9l5.500 5.500" stroke-width="3" stroke-linecap="round"/></svg>
<div class="a b blue" style="left:1558px;top:350px;font-size:14px;letter-spacing:0">Tìm kiếm</div>
<div class="a" style="left:1102px;top:372px;width:523px;height:459px;border:1px solid #a9a9a9;background:#fff"></div>
<div class="a hatch" style="left:1103px;top:373px;width:521px;height:23px"></div>
<div class="hl" style="left:1103px;top:395px;width:521px;background:#b0b0b0"></div>
<div class="hl" style="left:1103px;top:425px;width:521px;height:2px;background:#b8b8b8"></div>
<div class="a hatch" style="left:1103px;top:425px;width:21px;height:111px"></div>
<div class="a hatch" style="left:1103px;top:396px;width:21px;height:27px"></div>
<div class="a" style="left:1125px;top:425px;width:499px;height:27px;background:#f4f4f4"></div>
<div class="a" style="left:1125px;top:425px;width:90px;height:27px;background:linear-gradient(90deg,#ffff00 0,#ffff20 45%,#ffffb8 100%)"></div>
<div class="vl" style="left:1124px;top:373px;height:164px;background:#b0b0b0"></div>
<div class="vl" style="left:1124px;top:373px;height:23px;background:#b8b8b8"></div>
<div class="vl" style="left:1215px;top:373px;height:164px;background:#d0d0d0"></div>
<div class="vl" style="left:1215px;top:373px;height:23px;background:#b8b8b8"></div>
<div class="vl" style="left:1318px;top:373px;height:164px;background:#d0d0d0"></div>
<div class="vl" style="left:1318px;top:373px;height:23px;background:#b8b8b8"></div>
<div class="vl" style="left:1473px;top:373px;height:164px;background:#d0d0d0"></div>
<div class="vl" style="left:1473px;top:373px;height:23px;background:#b8b8b8"></div>
<div class="vl" style="left:1548px;top:373px;height:164px;background:#d0d0d0"></div>
<div class="vl" style="left:1548px;top:373px;height:23px;background:#b8b8b8"></div>
<div class="hl" style="left:1103px;top:452px;width:521px;background:#d0d0d0"></div>
<div class="hl" style="left:1103px;top:480px;width:521px;background:#d0d0d0"></div>
<div class="hl" style="left:1103px;top:508px;width:521px;background:#d0d0d0"></div>
<div class="hl" style="left:1103px;top:536px;width:521px;background:#d0d0d0"></div>
<div class="a b t13" style="left:1129px;top:377px">Ngày lập</div>
<div class="a b t13" style="left:1220px;top:377px">Mã phiếu</div>
<div class="a b t13" style="left:1323px;top:377px">Khách hàng</div>
<div class="a b t13" style="left:1478px;top:377px">Tổng tiền</div>
<div class="a b t13" style="left:1553px;top:377px">Ghi chú</div>
<svg style="left:1107px;top:405px" width="6" height="10" viewBox="0 0 6 10"><circle cx="3" cy="3.200" r="2.100" fill="#000"/><circle cx="2.500" cy="2.700" r=".7" fill="#fff"/><path d="M3 5v4.500" stroke="#000" stroke-width="1.200"/></svg>
<div class="a" style="left:1133px;top:407px;width:9px;height:4px;border-top:1px solid #555;border-bottom:1px solid #555"></div>
<svg style="left:1220px;top:404px" width="17" height="11" viewBox="0 0 17 11"><rect x="5" y="0" width="7" height="11" fill="#12a12c"/><text x="2.500" y="8.500" font-family="Liberation Mono,monospace" font-size="7" font-weight="bold" fill="#555" text-anchor="middle">A</text><text x="8.500" y="8.500" font-family="Liberation Mono,monospace" font-size="7" font-weight="bold" fill="#fff" text-anchor="middle">B</text><text x="14.500" y="8.500" font-family="Liberation Mono,monospace" font-size="7" font-weight="bold" fill="#555" text-anchor="middle">C</text></svg>
<svg style="left:1323px;top:404px" width="17" height="11" viewBox="0 0 17 11"><rect x="5" y="0" width="7" height="11" fill="#12a12c"/><text x="2.500" y="8.500" font-family="Liberation Mono,monospace" font-size="7" font-weight="bold" fill="#555" text-anchor="middle">A</text><text x="8.500" y="8.500" font-family="Liberation Mono,monospace" font-size="7" font-weight="bold" fill="#fff" text-anchor="middle">B</text><text x="14.500" y="8.500" font-family="Liberation Mono,monospace" font-size="7" font-weight="bold" fill="#555" text-anchor="middle">C</text></svg>
<div class="a" style="left:1482px;top:407px;width:9px;height:4px;border-top:1px solid #555;border-bottom:1px solid #555"></div>
<svg style="left:1553px;top:404px" width="17" height="11" viewBox="0 0 17 11"><rect x="5" y="0" width="7" height="11" fill="#12a12c"/><text x="2.500" y="8.500" font-family="Liberation Mono,monospace" font-size="7" font-weight="bold" fill="#555" text-anchor="middle">A</text><text x="8.500" y="8.500" font-family="Liberation Mono,monospace" font-size="7" font-weight="bold" fill="#fff" text-anchor="middle">B</text><text x="14.500" y="8.500" font-family="Liberation Mono,monospace" font-size="7" font-weight="bold" fill="#555" text-anchor="middle">C</text></svg>
<div class="a" style="left:1109px;top:434px;width:0;height:0;border-top:4px solid transparent;border-bottom:4px solid transparent;border-left:4px solid #000"></div>
<div class="a b red t14" style="left:1129px;top:431px;letter-spacing:1.1px">27/10/20...</div>
<div class="a t14" style="left:1220px;top:431px">KTH00005-2...</div>
<div class="a t14" style="left:1323px;top:431px;font-size:13.500px">Phòng Khám Bs Thái</div>
<div class="a t14" style="right:375px;top:431px">10,800,...</div>
<div class="a t14" style="left:1129px;top:459px">27/10/2023</div>
<div class="a t14" style="left:1220px;top:459px">KTH00004-2...</div>
<div class="a t14" style="left:1323px;top:459px;font-size:13.500px">Phòng Khám Bs Nghiệp</div>
<div class="a t14" style="right:375px;top:459px">0</div>
<div class="a t14" style="left:1129px;top:487px">27/10/2023</div>
<div class="a t14" style="left:1220px;top:487px">KTH00003-2...</div>
<div class="a t14" style="left:1323px;top:487px;font-size:13.500px">Trần Hoàng Sa</div>
<div class="a t14" style="right:375px;top:487px">6,500</div>
<div class="a t14" style="left:1129px;top:515px">27/10/2023</div>
<div class="a t14" style="left:1220px;top:515px">KTH00002-2...</div>
<div class="a t14" style="left:1323px;top:515px;font-size:13.500px">Nguyễn Văn Tám</div>
<div class="a t14" style="right:375px;top:515px">6,500</div>
<div class="a hatch" style="left:1103px;top:780px;width:521px;height:33px"></div>
<div class="hl" style="left:1103px;top:779px;width:521px"></div>
<div class="a" style="left:1217px;top:782px;width:101px;height:29px;border:1px dashed #c8c8c8;background:#fff"></div>
<div class="a" style="left:1475px;top:782px;width:73px;height:29px;border:1px dashed #c8c8c8;background:#fff"></div>
<div class="a b red t14" style="right:607px;top:791px;letter-spacing:.3px">Có 4 phiếu</div>
<div class="a b red t14" style="right:377px;top:790px;letter-spacing:.6px">10,813...</div>
<div class="dh" style="left:1103px;top:813px;width:521px"></div>
<div class="a" style="left:1109px;top:817px;width:0;height:0;border-top:4px solid transparent;border-bottom:4px solid transparent;border-right:4px solid #000"></div>
<div class="a hatch" style="left:1120px;top:814px;width:373px;height:15px;border:1px solid #ababab"></div>
<div class="a" style="left:1614px;top:817px;width:0;height:0;border-top:4px solid transparent;border-bottom:4px solid transparent;border-left:4px solid #000"></div>


<svg style="left:535px;top:513px" width="13" height="20" viewBox="0 0 13 20"><path d="M.700 .800V16.500L4.700 12.600 7.300 18.300 9.500 17.300 7.100 11.800 11.900 11.500z" fill="#fff" stroke="#1a1a26" stroke-width="1.100" stroke-linejoin="round"/></svg>
<!-- ===== STATUS BAR ===== -->
<div class="a b" style="left:8px;top:1021.500px;font-size:11.500px;letter-spacing:.13px">Chào mừng: Administrator đến với phần mềm MekongSoft</div>
<div class="vl" style="left:349px;top:1021px;height:12px;background:#b8b8b8"></div>
<div class="a b" style="left:363px;top:1021.500px;font-size:11.500px;letter-spacing:.13px">Version: 4.2.0</div>
<div class="vl" style="left:452px;top:1021px;height:12px;background:#b8b8b8"></div>
<div class="a b red" style="left:466px;top:1021.500px;font-size:11.500px;letter-spacing:.37px">Ngày: 27/10/2023 4:34:11 CH</div>
<div class="dv" style="left:1613px;top:1013px;height:28px"></div>
<div class="a b" style="left:1624px;top:1021.500px;font-size:11.500px;letter-spacing:.17px">@2023 MekongSoft. Thông tin hỗ trợ: 0901 000 508</div>
<div class="hl" style="left:0;top:1039px;width:1920px;height:2px;background:#cfdbe6"></div>
</body>
</html>
